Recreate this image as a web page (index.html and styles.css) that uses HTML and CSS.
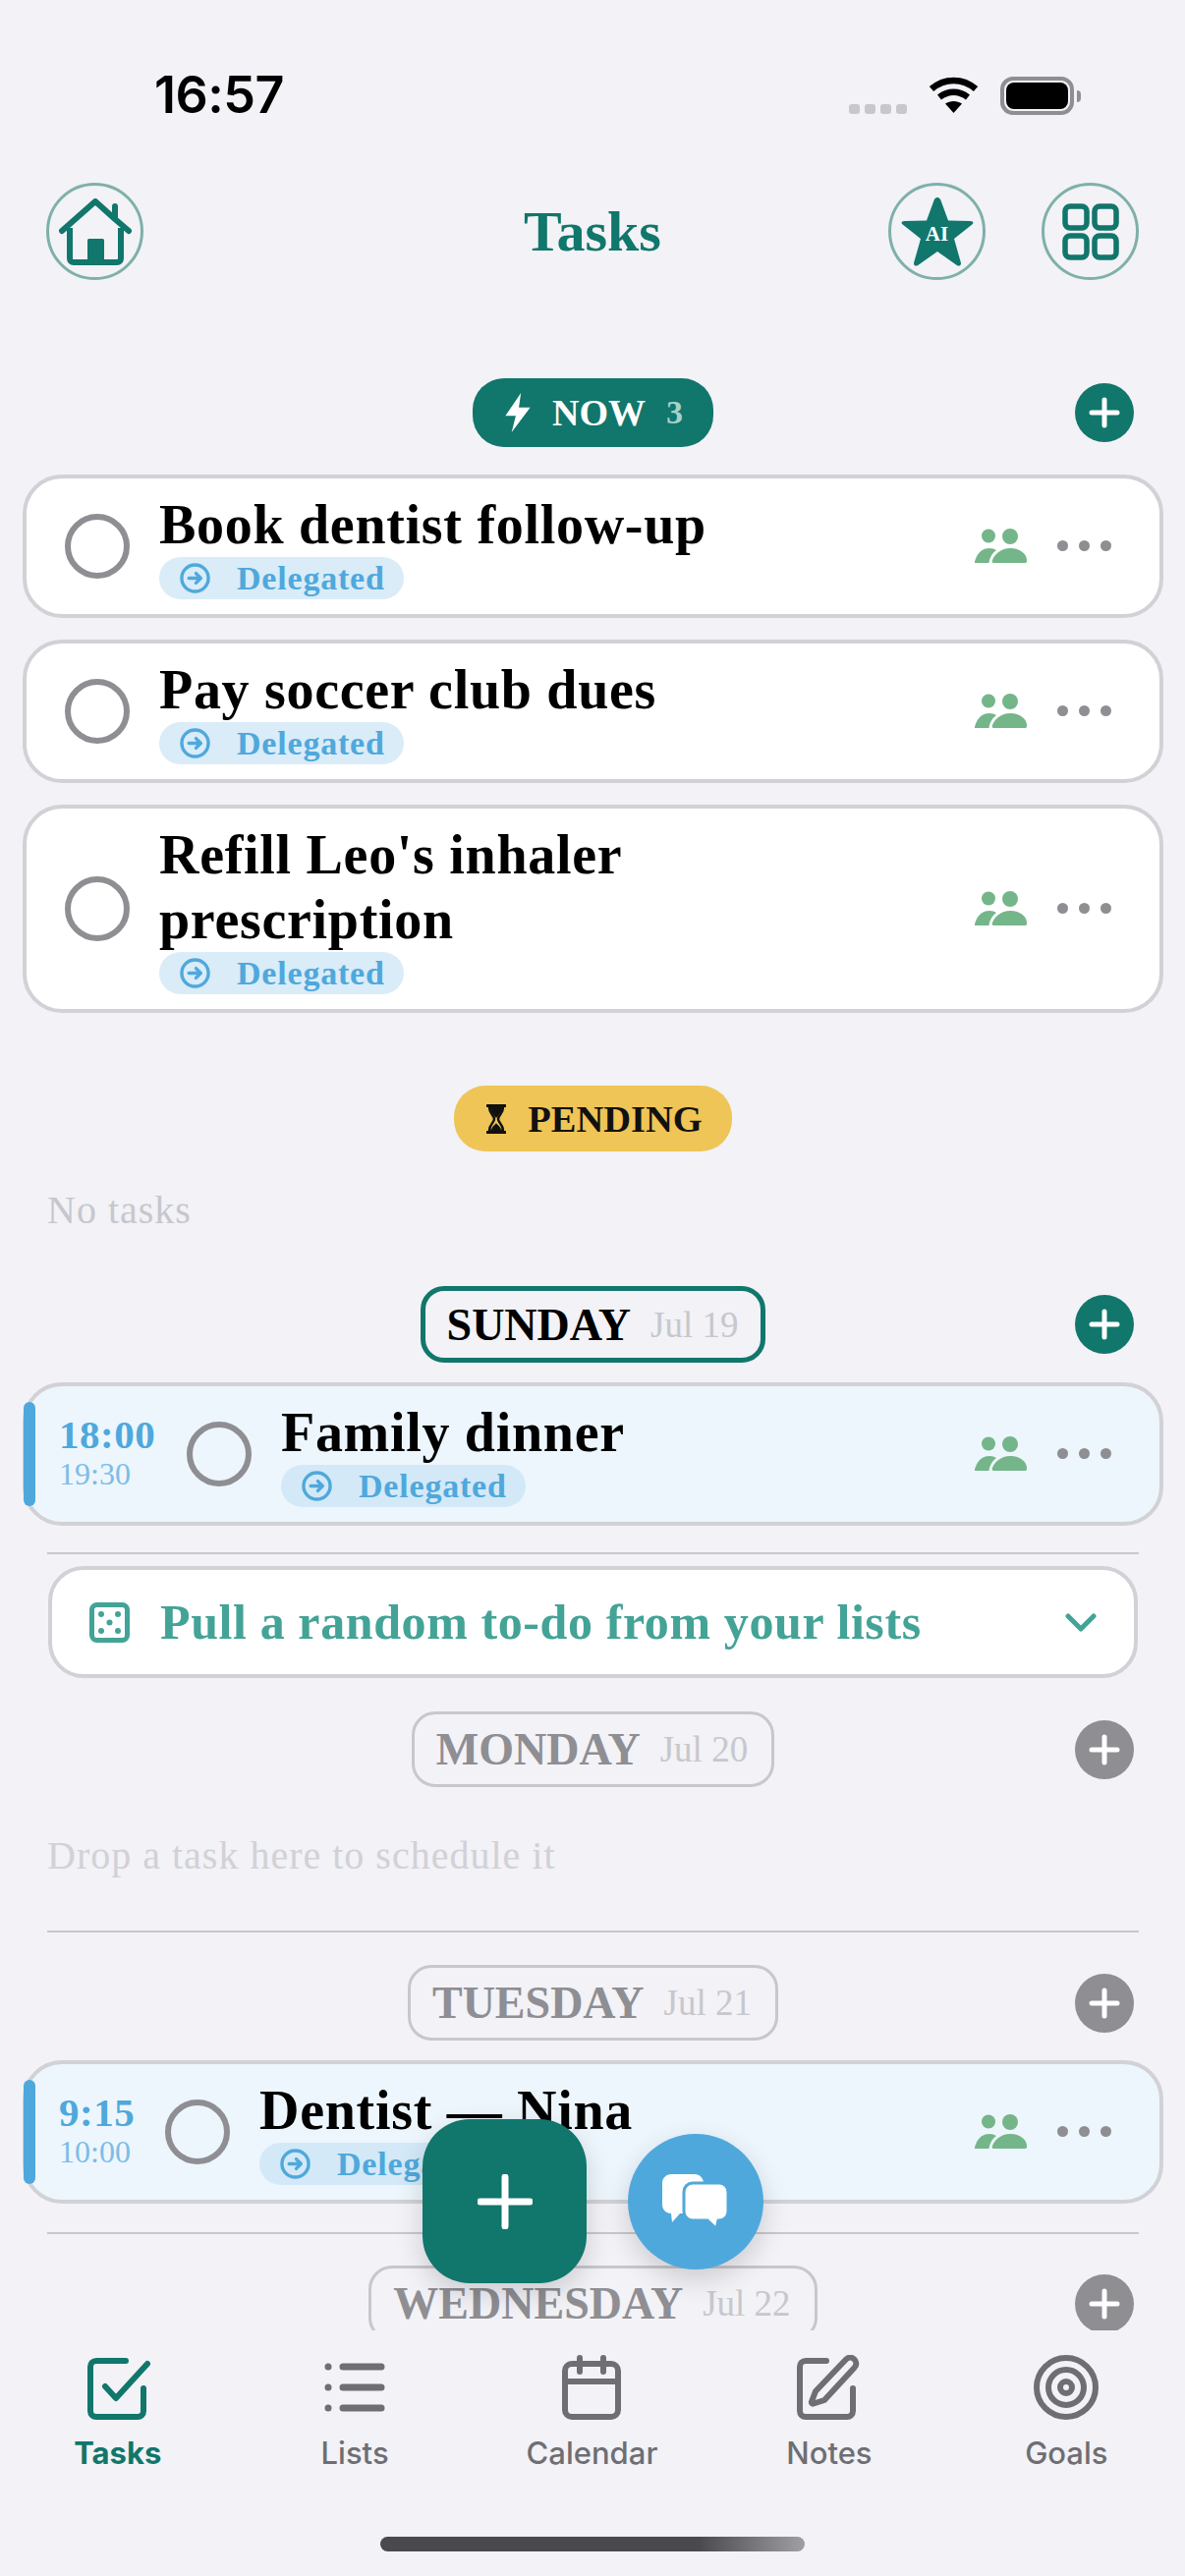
FILE: index.html
```html
<!DOCTYPE html>
<html lang="en">
<head>
    <meta charset="UTF-8">
    <meta name="viewport" content="width=device-width, initial-scale=1.0">
    <title>Tasks</title>
    <link rel="stylesheet" href="styles.css">
</head>
<body>
    <svg class="defs" width="0" height="0">
        <symbol id="i-plus" viewBox="0 0 60 60"><path d="M30 17v26M17 30h26" fill="none" stroke="#fff" stroke-width="5" stroke-linecap="round"/></symbol>
        <symbol id="i-deleg" viewBox="0 0 32 32"><g fill="none" stroke="#4fa8dc" stroke-width="3.500" stroke-linecap="round" stroke-linejoin="round"><circle cx="16" cy="16" r="14"/><path d="M9.5 16h12.5M17 11l5 5-5 5"/></g></symbol>
        <symbol id="i-people" viewBox="0 0 53 35"><g fill="#75b58a"><circle cx="14" cy="7.500" r="7"/><circle cx="36" cy="8" r="8"/><path d="M0 35c0-2 3-15 15-15 3 0 5 .7 7 2-4 3-7 8-7.500 13z"/><path d="M19 35c-1.500 0-1.500-1.500-1-3 2-6 9-12 18.500-12S53 26 53 32c.3 1.500 0 3-1.500 3z"/></g></symbol>
    </svg>

    <div class="status">
        <span class="clock">16:57</span>
        <div class="status-icons">
            <div class="signal"><i></i><i></i><i></i><i></i></div>
            <svg class="wifi" width="51" height="37" viewBox="0 0 51 37"><g fill="none" stroke="#000" stroke-width="6.500"><path d="M3 12.500C16 1 35 1 48 12.500"/><path d="M11 21c9-7 20-7 29 0"/></g><path d="M25.500 37L17 27.500c5-3.500 12-3.500 17 0z"/></svg>
            <div class="battery"><div class="battery-fill"></div></div>
            <div class="battery-nub"></div>
        </div>
    </div>

    <header class="topbar">
        <div class="top-left">
            <button class="round-btn">
                <svg width="74" height="68" viewBox="0 0 74 68"><path d="M3 33L37 3l20 18V8M71 33L57 21" fill="none" stroke="#11766b" stroke-width="6" stroke-linecap="round" stroke-linejoin="round"/><path d="M11 30v31c0 2.500 1.500 4 4 4h44c2.500 0 4-1.500 4-4V30" fill="none" stroke="#11766b" stroke-width="6"/><rect x="29" y="41" width="17" height="24" rx="1.500" fill="#11766b"/></svg>
            </button>
        </div>
        <h1 class="title">Tasks</h1>
        <div class="top-right">
            <button class="round-btn ai">
                <svg width="74" height="72" viewBox="0 0 74 72"><path d="M37 1c2 0 3 1.500 3.500 3l7.500 20.500 22.500.5c3 0 3.800 2 1.800 3.600L54 43l6.800 24c.8 3-1.500 4.500-4 3L37 56 17.200 70c-2.500 1.500-4.800 0-4-3L20 43 1.700 28.600C-.3 27 .5 25 3.500 25L26 24.500 33.500 4c.5-1.500 1.500-3 3.500-3z" fill="#11766b"/></svg>
                <span class="ai-text">AI</span>
            </button>
            <button class="round-btn">
                <svg width="58" height="58" viewBox="0 0 58 58"><g fill="none" stroke="#11766b" stroke-width="5.500"><rect x="3" y="3" width="22" height="22" rx="5"/><rect x="33" y="3" width="22" height="22" rx="5"/><rect x="3" y="33" width="22" height="22" rx="5"/><rect x="33" y="33" width="22" height="22" rx="5"/></g></svg>
            </button>
        </div>
    </header>

    <main class="scroll">
        <div class="sec-head">
            <div class="pill pill-now">
                <svg width="28" height="40" viewBox="0 0 26 38"><path d="M16 0L1 22h10L7 38l18-24H14z" fill="#fff"/></svg>
                <span>NOW</span>
                <span class="count">3</span>
            </div>
            <button class="add"><svg width="60" height="60"><use href="#i-plus"/></svg></button>
        </div>

        <div class="cards">
            <div class="card">
                <div class="radio"></div>
                <div class="card-body">
                    <div class="card-title">Book dentist follow-up</div>
                    <span class="tag"><svg width="31" height="31"><use href="#i-deleg"/></svg>Delegated</span>
                </div>
                <svg class="people" width="53" height="35"><use href="#i-people"/></svg>
                <div class="dots"><i></i><i></i><i></i></div>
            </div>
            <div class="card">
                <div class="radio"></div>
                <div class="card-body">
                    <div class="card-title">Pay soccer club dues</div>
                    <span class="tag"><svg width="31" height="31"><use href="#i-deleg"/></svg>Delegated</span>
                </div>
                <svg class="people" width="53" height="35"><use href="#i-people"/></svg>
                <div class="dots"><i></i><i></i><i></i></div>
            </div>
            <div class="card">
                <div class="radio"></div>
                <div class="card-body">
                    <div class="card-title">Refill Leo's inhaler<br>prescription</div>
                    <span class="tag"><svg width="31" height="31"><use href="#i-deleg"/></svg>Delegated</span>
                </div>
                <svg class="people" width="53" height="35"><use href="#i-people"/></svg>
                <div class="dots"><i></i><i></i><i></i></div>
            </div>
        </div>

        <div class="sec-head pending-head">
            <div class="pill pill-pending">
                <svg width="20" height="30" viewBox="0 0 20 30"><path d="M1 1.500h18M1 28.500h18" stroke="#111" stroke-width="3" stroke-linecap="round"/><path d="M3 3c0 7 5 8 5 12s-5 5-5 12h14c0-7-5-8-5-12s5-5 5-12z" fill="none" stroke="#111" stroke-width="2.500"/><path d="M4 4h12c-.5 5-4 7-6 10-2-3-5.500-5-6-10zM5 26c1-4 4-5 5-7 1 2 4 3 5 7z" fill="#111"/></svg>
                <span>PENDING</span>
            </div>
        </div>
        <p class="empty no-tasks">No tasks</p>

        <div class="sec-head sunday-head">
            <div class="day day-active"><span class="day-name">SUNDAY</span><span class="day-date">Jul 19</span></div>
            <button class="add"><svg width="60" height="60"><use href="#i-plus"/></svg></button>
        </div>
        <div class="card card-timed">
            <div class="times"><span class="t-start">18:00</span><span class="t-end">19:30</span></div>
            <div class="radio"></div>
            <div class="card-body">
                <div class="card-title">Family dinner</div>
                <span class="tag"><svg width="31" height="31"><use href="#i-deleg"/></svg>Delegated</span>
            </div>
            <svg class="people" width="53" height="35"><use href="#i-people"/></svg>
            <div class="dots"><i></i><i></i><i></i></div>
        </div>
        <div class="divider d1"></div>

        <div class="random">
            <svg width="41" height="41" viewBox="0 0 41 41"><rect x="2.500" y="2.500" width="36" height="36" rx="5" fill="none" stroke="#43a397" stroke-width="5"/><g fill="#43a397"><circle cx="12" cy="12" r="3"/><circle cx="29" cy="12" r="3"/><circle cx="20.500" cy="20.500" r="3"/><circle cx="12" cy="29" r="3"/><circle cx="29" cy="29" r="3"/></g></svg>
            <span class="random-text">Pull a random to-do from your lists</span>
            <svg class="chev" width="32" height="19" viewBox="0 0 32 19"><path d="M3 3l13 13L29 3" fill="none" stroke="#43a397" stroke-width="5" stroke-linecap="round" stroke-linejoin="round"/></svg>
        </div>

        <div class="sec-head monday-head">
            <div class="day"><span class="day-name">MONDAY</span><span class="day-date">Jul 20</span></div>
            <button class="add add-gray"><svg width="60" height="60"><use href="#i-plus"/></svg></button>
        </div>
        <p class="empty drop">Drop a task here to schedule it</p>
        <div class="divider d2"></div>

        <div class="sec-head tuesday-head">
            <div class="day"><span class="day-name">TUESDAY</span><span class="day-date">Jul 21</span></div>
            <button class="add add-gray"><svg width="60" height="60"><use href="#i-plus"/></svg></button>
        </div>
        <div class="card card-timed card-short">
            <div class="times"><span class="t-start">9:15</span><span class="t-end">10:00</span></div>
            <div class="radio"></div>
            <div class="card-body">
                <div class="card-title">Dentist — Nina</div>
                <span class="tag"><svg width="31" height="31"><use href="#i-deleg"/></svg>Delegated</span>
            </div>
            <svg class="people" width="53" height="35"><use href="#i-people"/></svg>
            <div class="dots"><i></i><i></i><i></i></div>
        </div>
        <div class="divider d3"></div>

        <div class="sec-head wednesday-head">
            <div class="day"><span class="day-name">WEDNESDAY</span><span class="day-date">Jul 22</span></div>
            <button class="add add-gray"><svg width="60" height="60"><use href="#i-plus"/></svg></button>
        </div>
    </main>

    <button class="fab fab-add">
        <svg width="56" height="56" viewBox="0 0 56 56"><path d="M28 3v50M3 28h50" fill="none" stroke="#fff" stroke-width="7" stroke-linecap="round"/></svg>
    </button>
    <button class="fab fab-chat">
        <svg width="68" height="56" viewBox="0 0 68 56"><path d="M9 0h24c5 0 9 4 9 9v22c0 5-4 9-9 9H18l-8 9 -1-9c-5 0-9-4-9-9V9c0-5 4-9 9-9z" fill="#fff"/><path d="M31 9h27c5 0 9 4 9 9v20c0 5-4 9-9 9h-1l-2 8.500-9-8.500H31c-5 0-9-4-9-9V18c0-5 4-9 9-9z" fill="#fff" stroke="#4fa8dc" stroke-width="3"/></svg>
    </button>

    <nav class="tabbar">
        <div class="tabs">
            <a class="tab tab-active">
                <svg width="70" height="66" viewBox="0 0 70 66"><path d="M43 6H13c-3.500 0-6 2.500-6 6v45c0 3.500 2.500 6 6 6h42c3.500 0 6-2.500 6-6V34" fill="none" stroke="#11766b" stroke-width="6" stroke-linecap="round"/><path d="M22 32l11 12L65 9" fill="none" stroke="#11766b" stroke-width="6" stroke-linecap="round" stroke-linejoin="round"/></svg>
                <span>Tasks</span>
            </a>
            <a class="tab">
                <svg width="66" height="66" viewBox="0 0 66 66"><g fill="#6e6e73"><circle cx="6" cy="12" r="3.500"/><circle cx="6" cy="33" r="3.500"/><circle cx="6" cy="54" r="3.500"/></g><path d="M21 12h39M21 33h39M21 54h39" stroke="#6e6e73" stroke-width="7" stroke-linecap="round"/></svg>
                <span>Lists</span>
            </a>
            <a class="tab">
                <svg width="60" height="66" viewBox="0 0 60 66"><rect x="3" y="9" width="54" height="54" rx="7" fill="none" stroke="#6e6e73" stroke-width="6"/><path d="M3 27h54" stroke="#6e6e73" stroke-width="6"/><path d="M18 3v14M42 3v14" stroke="#6e6e73" stroke-width="6" stroke-linecap="round"/></svg>
                <span>Calendar</span>
            </a>
            <a class="tab">
                <svg width="66" height="66" viewBox="0 0 66 66"><path d="M30 6H9C5.500 6 3 8.500 3 12v45c0 3.500 2.500 6 6 6h42c3.500 0 6-2.500 6-6V34" fill="none" stroke="#6e6e73" stroke-width="6" stroke-linecap="round"/><path d="M19 37L50 4.500c2.500-2.500 6-2.500 8.500 0s2.500 6 0 8.500L28 46l-11 3.500c-1.500.5-2.500-.5-2-2z" fill="none" stroke="#6e6e73" stroke-width="6" stroke-linejoin="round"/></svg>
                <span>Notes</span>
            </a>
            <a class="tab">
                <svg width="66" height="66" viewBox="0 0 66 66"><g fill="none" stroke="#6e6e73" stroke-width="6"><circle cx="33" cy="33" r="30"/><circle cx="33" cy="33" r="18"/><circle cx="33" cy="33" r="6"/></g></svg>
                <span>Goals</span>
            </a>
        </div>
        <div class="home-bar"></div>
    </nav>
</body>
</html>
```

FILE: styles.css
```css
* {
    box-sizing: border-box;
}
html, body {
    margin: 0;
    padding: 0;
}
body {
    position: relative;
    width: 1206px;
    height: 2622px;
    overflow: hidden;
    display: flex;
    flex-direction: column;
    background-color: #f2f2f7;
    font-family: "Liberation Serif", serif;
    color: #000;
}
button {
    border: none;
    padding: 0;
    background: none;
    font: inherit;
}
.defs {
    position: absolute;
}

/* status bar */
.status {
    height: 186px;
    flex: none;
    display: flex;
    justify-content: space-between;
    padding: 68px 106px 0 157px;
}
.clock {
    font-family: Inter, sans-serif;
    font-weight: 600;
    font-size: 52px;
    line-height: 58px;
    letter-spacing: -0.5px;
}
.status-icons {
    display: flex;
    align-items: flex-start;
    padding-top: 10px;
}
.signal {
    display: flex;
    gap: 5px;
    margin-top: 28px;
    margin-right: 22px;
}
.signal i {
    width: 11px;
    height: 10px;
    border-radius: 3px;
    background: #c7c7cc;
}
.battery {
    width: 75px;
    height: 39px;
    margin-left: 22px;
    padding: 2px;
    border: 4px solid #8e8e93;
    border-radius: 13px;
}
.battery-fill {
    height: 100%;
    background: #000;
    border-radius: 8px;
}
.battery-nub {
    width: 4px;
    height: 12px;
    margin: 14px 0 0 3px;
    background: #8e8e93;
    border-radius: 0 4px 4px 0;
}

/* top bar */
.topbar {
    height: 99px;
    flex: none;
    display: grid;
    grid-template-columns: 1fr auto 1fr;
    align-items: center;
    padding: 0 47px;
}
.top-right {
    display: flex;
    justify-content: flex-end;
    gap: 57px;
}
.round-btn {
    position: relative;
    width: 99px;
    height: 99px;
    display: flex;
    align-items: center;
    justify-content: center;
    border: 3px solid #7fb0a9;
    border-radius: 50%;
}
.ai-text {
    position: absolute;
    left: 0;
    right: 0;
    top: 36px;
    text-align: center;
    color: #fff;
    font-weight: 700;
    font-size: 21px;
    line-height: 26px;
}
.title {
    margin: 0;
    color: #11766b;
    font-size: 58px;
    line-height: 64px;
    font-weight: 700;
}

/* list */
.scroll {
    flex: none;
    height: 2087px;
    overflow: hidden;
    padding: 100px 22px 0 23px;
}
.sec-head {
    display: grid;
    grid-template-columns: 1fr auto 1fr;
    align-items: center;
}
.sec-head > :first-child {
    grid-column: 2;
}
.add {
    justify-self: end;
    width: 60px;
    height: 60px;
    margin-right: 30px;
    border-radius: 50%;
    background: #11766b;
}
.add svg {
    display: block;
}
.add-gray {
    background: #8e8e93;
}
.pill {
    display: flex;
    align-items: center;
    font-weight: 700;
    border-radius: 32px;
}
.pill-now {
    height: 70px;
    padding: 0 31px 0 32px;
    gap: 21px;
    font-size: 38px;
    background: #11766b;
    color: #fff;
}
.count {
    font-size: 34px;
    color: #a5d1cb;
}
.pill-pending {
    height: 67px;
    padding: 0 30px 0 33px;
    gap: 22px;
    font-size: 38.5px;
    background: #eec556;
    color: #111;
}
.cards {
    display: flex;
    flex-direction: column;
    gap: 22px;
    margin-top: 28px;
}
.card {
    display: flex;
    align-items: center;
    padding: 14px 49px 15px 39px;
    background: #fff;
    border: 4px solid #d1d1d6;
    border-radius: 40px;
}
.radio {
    flex: none;
    width: 66px;
    height: 66px;
    border: 6px solid #8e8e93;
    border-radius: 50%;
}
.card-body {
    flex: 1;
    margin-left: 30px;
}
.card-title {
    font-size: 56px;
    line-height: 66px;
    font-weight: 700;
    letter-spacing: 0.7px;
}
.tag {
    display: inline-flex;
    align-items: center;
    height: 43px;
    padding: 0 19px 0 21px;
    background: #d9ecf8;
    border-radius: 22px;
    color: #4fa8dc;
    font-size: 34px;
    font-weight: 700;
    letter-spacing: 0.8px;
    gap: 27px;
    vertical-align: top;
}
.people {
    flex: none;
}
.dots {
    display: flex;
    gap: 11px;
    margin-left: 31px;
}
.dots i {
    width: 11px;
    height: 11px;
    border-radius: 50%;
    background: #8e8e93;
}
.card-timed {
    position: relative;
    background: #edf6fd;
    padding-left: 33px;
}
.card-timed .card-body {
    margin-left: 30px;
}
.card-timed .tag {
    background: #d3e9f7;
}
.card-timed::before {
    content: "";
    position: absolute;
    left: -3px;
    top: 16px;
    bottom: 16px;
    width: 12px;
    border-radius: 6px;
    background: #4fa8dc;
}
.times {
    flex: none;
    width: 98px;
    margin-right: 32px;
    display: flex;
    flex-direction: column;
    color: #4fa8dc;
}
.card-short .times {
    width: 76px;
}
.card-short {
    margin-top: 20px;
}
.t-start {
    font-size: 41px;
    line-height: 40px;
    font-weight: 700;
    letter-spacing: 0.5px;
}
.t-end {
    font-size: 32px;
    line-height: 40px;
    color: #7cbde6;
}
.pending-head {
    margin-top: 74px;
}
.empty {
    margin: 0;
    font-size: 40px;
    line-height: 44px;
    letter-spacing: 1px;
}
.no-tasks {
    margin: 38px 0 0 25px;
    color: #c7c7cc;
}
.drop {
    margin: 48px 0 0 25px;
    color: #d1d1d6;
}
.day {
    display: flex;
    align-items: center;
    gap: 20px;
    height: 77px;
    padding: 0 24px 0 22px;
    border: 3px solid #c7c7cc;
    border-radius: 24px;
    color: #8e8e93;
}
.day-active {
    height: 78px;
    padding: 0 23px 0 22px;
    border: 5px solid #11766b;
    color: #000;
}
.day-name {
    font-size: 46px;
    font-weight: 700;
}
.day-date {
    font-size: 37px;
    color: #c7c7cc;
}
.sunday-head {
    margin-top: 55px;
}
.sunday-head + .card {
    margin-top: 20px;
}
.divider {
    height: 2px;
    margin: 0 25px;
    background: #c7c7cc;
}
.d1 {
    margin-top: 27px;
}
.d2 {
    margin-top: 54px;
}
.d3 {
    margin-top: 29px;
}
.random {
    display: flex;
    align-items: center;
    height: 114px;
    margin: 12px 26px 0 26px;
    padding: 0 38px;
    background: #fff;
    border: 4px solid #d1d1d6;
    border-radius: 36px;
}
.random-text {
    flex: 1;
    margin-left: 31px;
    color: #43a397;
    font-size: 50px;
    font-weight: 700;
    letter-spacing: 0.6px;
}
.monday-head {
    margin-top: 34px;
}
.tuesday-head {
    margin-top: 33px;
}
.wednesday-head {
    margin-top: 32px;
}

/* floating buttons */
.fab {
    position: absolute;
    display: flex;
    align-items: center;
    justify-content: center;
    box-shadow: 0 10px 28px rgba(0, 0, 0, 0.16);
}
.fab-add {
    left: 430px;
    top: 2157px;
    width: 167px;
    height: 167px;
    border-radius: 48px;
    background: #11766b;
}
.fab-chat {
    left: 639px;
    top: 2172px;
    width: 138px;
    height: 138px;
    border-radius: 50%;
    background: #4fa8dc;
}

/* tabs */
.tabbar {
    flex: 1;
    display: flex;
    flex-direction: column;
    background: #f2f2f7;
}
.tabs {
    display: grid;
    grid-template-columns: repeat(5, 1fr);
    margin: 25px 0 0 -1px;
}
.tab {
    display: flex;
    flex-direction: column;
    align-items: center;
    gap: 14px;
    color: #6e6e73;
    font-family: Inter, sans-serif;
    font-size: 31px;
    line-height: 40px;
    font-weight: 500;
}
.tab-active {
    color: #11766b;
    font-weight: 700;
}
.home-bar {
    width: 432px;
    height: 15px;
    margin: 65px 0 0 387px;
    border-radius: 8px;
    background: linear-gradient(90deg, #4a4a4d 75%, #a0a0a4);
}
```
